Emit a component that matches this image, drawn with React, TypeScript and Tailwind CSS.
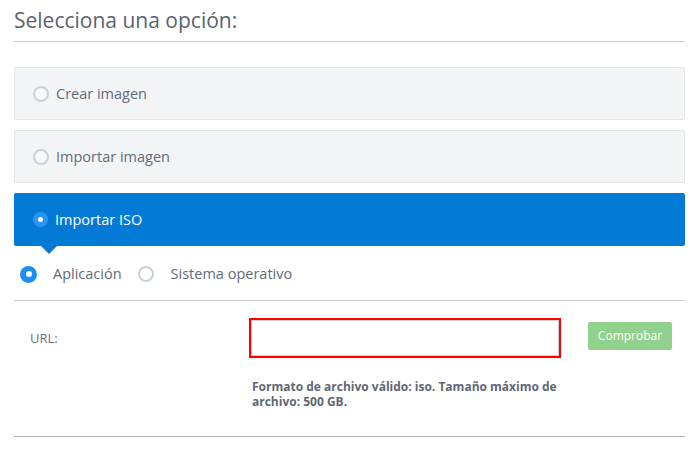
import { useState } from "react";

type Option = { id: string; label: string };

const options: Option[] = [
  { id: "create", label: "Crear imagen" },
  { id: "import", label: "Importar imagen" },
  { id: "iso", label: "Importar ISO" },
];

function Radio({ checked, onBlue }: { checked: boolean; onBlue?: boolean }) {
  if (checked) {
    return (
      <span
        className={`flex items-center justify-center rounded-full ${
          onBlue ? "w-[15px] h-[15px] bg-[#2a95f2]" : "w-[17px] h-[17px] bg-[#1b8ef2]"
        }`}
      >
        <span className={`rounded-full bg-white ${onBlue ? "w-[5px] h-[5px]" : "w-[6px] h-[6px]"}`} />
      </span>
    );
  }
  return <span className="w-[16px] h-[16px] rounded-full border-2 border-[#c6d1db] bg-white/40" />;
}

export default function App() {
  const [selected, setSelected] = useState("iso");
  const [kind, setKind] = useState("app");

  return (
    <div
      className="w-[699px] h-[470px] bg-white px-[14px] pt-[6px]"
      style={{ fontFamily: '"Open Sans", "Liberation Sans", sans-serif' }}
    >
      <h2 className="text-[21px] leading-[28px] text-[#5a6370] pb-[7px] border-b border-[#c8cdd3]">
        Selecciona una opción:
      </h2>

      <div className="mt-[25px] flex flex-col gap-[10px]">
        {options.map((o) => {
          const active = o.id === selected;
          return (
            <div key={o.id} className="relative">
              <button
                onClick={() => setSelected(o.id)}
                className={`w-full h-[53px] flex items-center gap-[7px] pl-[18px] text-[14.5px] text-left rounded-[2px] ${
                  active
                    ? "bg-[#037ad6] text-white border border-[#037ad6]"
                    : "bg-[#f3f4f6] text-[#626b78] border border-[#e3e4e6]"
                }`}
              >
                <Radio checked={active} onBlue />
                <span>{o.label}</span>
              </button>
              {active && (
                <span className="absolute left-[27px] -bottom-[8px] w-0 h-0 border-l-[8px] border-r-[8px] border-t-[8px] border-l-transparent border-r-transparent border-t-[#037ad6]" />
              )}
            </div>
          );
        })}
      </div>

      <div className="h-[55px] flex items-center pl-[6px] pt-[2px] text-[14.5px] text-[#626b78] border-b border-[#c8cdd3]">
        <button onClick={() => setKind("app")} className="flex items-center">
          <Radio checked={kind === "app"} />
          <span className="ml-[16px]">Aplicación</span>
        </button>
        <button onClick={() => setKind("os")} className="flex items-center ml-[16px]">
          <Radio checked={kind === "os"} />
          <span className="ml-[17px]">Sistema operativo</span>
        </button>
      </div>

      <div className="pt-[17px] pb-[27px] border-b border-[#a9b2bd] flex">
        <label className="w-[235px] pl-[16px] pt-[11px] text-[13px] text-[#6b7483]">URL:</label>
        <div className="w-[312px]">
          <div className="h-[40px] border-[2px] border-[#ff0000]">
            <input className="w-full h-full border border-[#cfd3d8] outline-none px-2 text-[13px]" />
          </div>
          <p className="mt-[21px] pl-[3px] text-[12px] leading-[15px] font-bold text-[#5f6676]">
            Formato de archivo válido: iso. Tamaño máximo de archivo: 500 GB.
          </p>
        </div>
        <button className="ml-[27px] mt-[4px] h-[28px] w-[84px] bg-[#8fd18d] text-white text-[12px] rounded-[2px]">
          Comprobar
        </button>
      </div>
    </div>
  );
}
